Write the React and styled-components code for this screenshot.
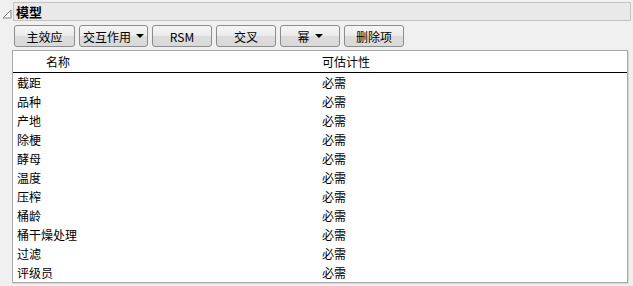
import React from "react";
import styled, { createGlobalStyle } from "styled-components";

const Global = createGlobalStyle`
  html, body {
    margin: 0;
    padding: 0;
    background: #f0f0f0;
  }
  body {
    font-family: "Noto Sans CJK SC", "Liberation Sans", sans-serif;
    font-size: 12px;
    color: #000;
  }
`;

const Panel = styled.div`
  width: 633px;
  height: 286px;
  box-sizing: border-box;
  padding: 2px 2px 0 2px;
  display: flex;
  flex-direction: column;
`;

const TitleRow = styled.div`
  display: flex;
  align-items: center;
  gap: 1px;
`;

const Toggle = styled.svg`
  width: 10px;
  height: 10px;
  flex: none;
  margin-top: 5px;
`;

const TitleBar = styled.div`
  flex: 1;
  height: 17px;
  background: #e9e9e9;
  border: 1px solid #c3c3c3;
  display: flex;
  align-items: center;
  padding-left: 2px;
  font-size: 13px;
  font-weight: bold;
  line-height: 17px;
`;

const Toolbar = styled.div`
  display: flex;
  gap: 4px;
  padding: 4px 0 0 12px;
`;

const Button = styled.button`
  width: ${(p) => p.$w || 60}px;
  height: 22px;
  box-sizing: border-box;
  border: 1px solid #8c8c8c;
  border-radius: 3px;
  background: linear-gradient(#f6f6f6, #ebebeb 50%, #dcdcdc 51%, #d9d9d9);
  font-family: "Noto Sans CJK SC", "Liberation Sans", sans-serif;
  font-size: 12px;
  color: #000;
  padding: 0;
  display: flex;
  align-items: center;
  justify-content: center;
  gap: 5px;
`;

const Caret = styled.span`
  width: 0;
  height: 0;
  border-left: 4px solid transparent;
  border-right: 4px solid transparent;
  border-top: 4px solid #000;
`;

const ListBox = styled.div`
  margin: 3px 0 0 10px;
  width: 616px;
  height: 233px;
  box-sizing: border-box;
  background: #fff;
  border: 1px solid #a8a8a8;
  box-shadow: 1px 1px 0 #d8d8d8;
`;

const Header = styled.div`
  display: grid;
  grid-template-columns: 309px 1fr;
  height: 20px;
  border-bottom: 1px solid #000;
  line-height: 20px;
  padding-top: 1px;
`;

const HeadCell = styled.div`
  padding-left: ${(p) => p.$pad}px;
`;

const Row = styled.div`
  display: grid;
  grid-template-columns: 305px 1fr;
  height: 19px;
  line-height: 19px;
  padding-left: 4px;
`;

const rows = [
  "截距",
  "品种",
  "产地",
  "除梗",
  "酵母",
  "温度",
  "压榨",
  "桶龄",
  "桶干燥处理",
  "过滤",
  "评级员",
];

export default function App() {
  return (
    <Panel>
      <Global />
      <TitleRow>
        <Toggle viewBox="0 0 10 10">
          <path d="M9 1 L9 9 L1 9 Z" fill="#fff" stroke="#808080" strokeWidth="1" />
        </Toggle>
        <TitleBar>模型</TitleBar>
      </TitleRow>
      <Toolbar>
        <Button $w={61}>主效应</Button>
        <Button $w={69}>
          交互作用<Caret />
        </Button>
        <Button $w={60}>RSM</Button>
        <Button $w={60}>交叉</Button>
        <Button $w={60}>
          幂<Caret />
        </Button>
        <Button $w={60}>删除项</Button>
      </Toolbar>
      <ListBox>
        <Header>
          <HeadCell $pad={33}>名称</HeadCell>
          <HeadCell $pad={0}>可估计性</HeadCell>
        </Header>
        {rows.map((r) => (
          <Row key={r}>
            <span>{r}</span>
            <span>必需</span>
          </Row>
        ))}
      </ListBox>
    </Panel>
  );
}
